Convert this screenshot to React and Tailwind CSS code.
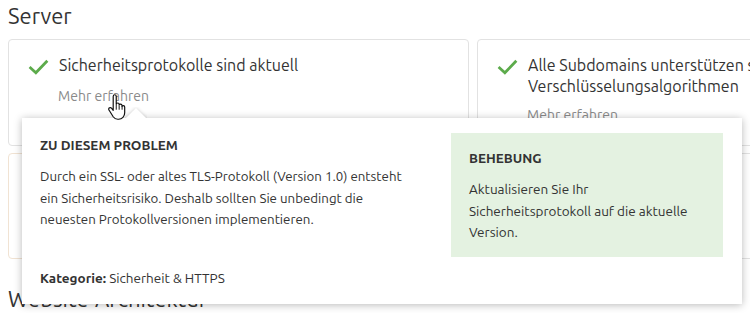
import React from "react";

function Check({ className }) {
  return (
    <svg viewBox="0 0 24 24" className={className} fill="none" stroke="#5cab4b" strokeWidth="3.2" strokeLinecap="square">
      <path d="M3 12.5 L9 18 L21 5.5" />
    </svg>
  );
}

function Hand() {
  return (
    <svg viewBox="0 0 18 24" width="20" height="26" className="absolute left-[107px] top-[94px]">
      <path
        d="M5.5 2.2c0-.9.7-1.5 1.4-1.5s1.4.6 1.4 1.5v7.3c.2-.8.8-1.2 1.4-1.2.7 0 1.3.6 1.3 1.4v.6c.2-.6.7-1 1.3-1 .7 0 1.3.6 1.3 1.4v.8c.2-.5.7-.8 1.2-.8.7 0 1.3.6 1.3 1.4v5.2c0 3.3-2.4 6-5.6 6H9.7c-1.8 0-3.2-.9-4.2-2.300L1.6 14.8c-.5-.7-.3-1.6.4-2 .6-.4 1.4-.3 1.9.3l1.6 2V2.2z"
        fill="#fff"
        stroke="#111"
        strokeWidth="1.1"
        strokeLinejoin="round"
      />
      <path d="M8.3 10v4.5M11 10.8v3.7M13.7 11.6v2.9" stroke="#111" strokeWidth="0.9" />
    </svg>
  );
}

export default function App() {
  return (
    <div className="relative w-[750px] h-[313px] overflow-hidden bg-white text-[#333] font-['Ubuntu','Noto_Sans',sans-serif]">
      <div className="px-2 pt-[1px]">
        <h2 className="text-[22px] leading-[30px] text-[#333]">Server</h2>
        <div className="mt-[8px] grid grid-cols-[461px_461px] gap-x-2 gap-y-[7px] w-[932px]">
          <div className="h-[107px] rounded border border-[#e2e2e2] pl-[19px] pt-[12px]">
            <div className="flex items-start gap-[10px]">
              <Check className="w-[21px] h-[21px] mt-[5px]" />
              <div className="text-[16px] leading-[21px] mt-[3px]">Sicherheitsprotokolle sind aktuell</div>
            </div>
            <div className="ml-[30px] mt-[8px] text-[14px] leading-[20px] text-[#8a8a8a]">Mehr erfahren</div>
          </div>
          <div className="h-[107px] rounded border border-[#e2e2e2] pl-[19px] pt-[12px]">
            <div className="flex items-start gap-[10px]">
              <Check className="w-[21px] h-[21px] mt-[5px]" />
              <div className="text-[16px] leading-[21px] mt-[3px]">
                Alle Subdomains unterstützen sichere
                <br />
                Verschlüsselungsalgorithmen
              </div>
            </div>
            <div className="ml-[30px] mt-[8px] text-[14px] leading-[20px] text-[#8a8a8a]">Mehr erfahren</div>
          </div>
          <div className="h-[106px] rounded border border-[#f1e3d3]"></div>
          <div className="h-[106px] rounded border border-[#e2e2e2]"></div>
        </div>
        <h2 className="mt-[25px] text-[22px] leading-[30px] text-[#333]">Website-Architektur</h2>
      </div>

      {/* Tooltip */}
      <div className="absolute left-[22px] top-[118px] w-[720px] h-[186px] bg-white shadow-[0_1px_8px_rgba(0,0,0,0.28)] flex pl-[18px] pt-[15px] pr-[19px]">
        <div className="absolute left-[103px] -top-[11px] w-[22px] h-[11px] overflow-hidden">
          <div className="w-[15px] h-[15px] bg-white rotate-45 translate-x-[3.5px] translate-y-[4px] shadow-[0_0_4px_rgba(0,0,0,0.2)]"></div>
        </div>
        <div className="flex flex-col w-[372px]">
          <div className="text-[13.5px] font-bold leading-[20px] mt-[2px] text-[#333]">ZU DIESEM PROBLEM</div>
          <p className="mt-[11px] text-[13.3px] leading-[21.5px] text-[#333]">
            Durch ein SSL- oder altes TLS-Protokoll (Version 1.0) entsteht ein Sicherheitsrisiko. Deshalb sollten Sie unbedingt die neuesten Protokollversionen implementieren.
          </p>
          <div className="mt-auto mb-[16px] text-[13.5px] leading-[20px]">
            <span className="font-bold">Kategorie:</span> Sicherheit &amp; HTTPS
          </div>
        </div>
        <div className="ml-auto mt-0 w-[272px] h-[124px] bg-[#e4f2e1] pl-[18px] pt-[15px] pr-4">
          <div className="text-[13.5px] font-bold leading-[20px] text-[#333]">BEHEBUNG</div>
          <p className="mt-[11px] text-[13.5px] leading-[21.5px] text-[#333]">
            Aktualisieren Sie Ihr Sicherheitsprotokoll auf die aktuelle Version.
          </p>
        </div>
      </div>

      <Hand />
    </div>
  );
}
